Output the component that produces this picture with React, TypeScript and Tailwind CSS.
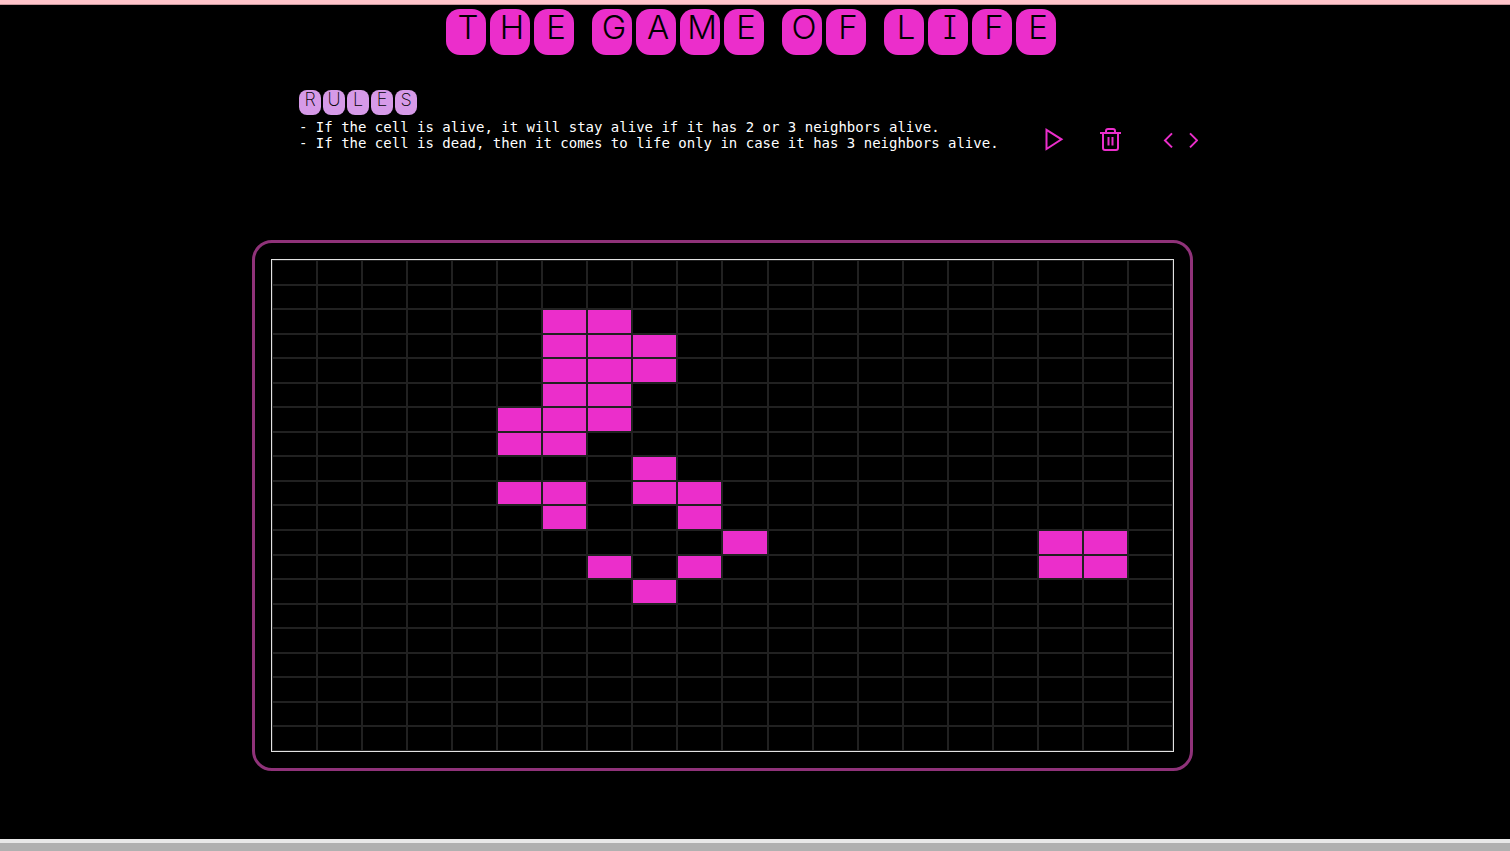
import { useState } from "react";

const SIZE = 20;

const START: Record<number, number[]> = {
  2: [6, 7],
  3: [6, 7, 8],
  4: [6, 7, 8],
  5: [6, 7],
  6: [5, 6, 7],
  7: [5, 6],
  8: [8],
  9: [5, 6, 8, 9],
  10: [6, 9],
  11: [10, 17, 18],
  12: [7, 9, 17, 18],
  13: [8],
};

function startCells(): boolean[] {
  return Array.from({ length: SIZE * SIZE }, (_, i) =>
    (START[Math.floor(i / SIZE)] ?? []).includes(i % SIZE),
  );
}

function nextCells(cells: boolean[]): boolean[] {
  return cells.map((alive, i) => {
    const row = Math.floor(i / SIZE);
    const col = i % SIZE;
    let count = 0;
    for (let r = row - 1; r <= row + 1; r++) {
      for (let c = col - 1; c <= col + 1; c++) {
        if ((r !== row || c !== col) && r >= 0 && c >= 0 && r < SIZE && c < SIZE && cells[r * SIZE + c]) count++;
      }
    }
    return count === 3 || (alive && count === 2);
  });
}

function Title() {
  return (
    <h1 className="flex flex-wrap justify-center gap-[18px] pt-1 pr-2 font-['Inter',sans-serif] text-[33px] leading-9 font-light text-black [font-feature-settings:'ss02','cv08']">
      {["THE", "GAME", "OF", "LIFE"].map((word) => (
        <span key={word} className="flex gap-1">
          {word.split("").map((letter, i) => (
            <span key={i} className="flex h-[46px] w-10 justify-center rounded-[14px] bg-[#eb2ecb] pl-1">
              {letter}
            </span>
          ))}
        </span>
      ))}
    </h1>
  );
}

function Rules() {
  return (
    <section>
      <h2 className="flex gap-0.5 font-['Inter',sans-serif] text-[18px] leading-5 font-extralight text-black [font-feature-settings:'ss02','cv08']">
        {"RULES".split("").map((letter) => (
          <span key={letter} className="h-[25px] w-[22px] rounded-lg bg-[#d69ae8] text-center">
            {letter}
          </span>
        ))}
      </h2>
      <p className="pt-1 font-['DejaVu_Sans_Mono',monospace] text-[14px] leading-4 text-white">
        - If the cell is alive, it will stay alive if it has 2 or 3 neighbors alive.
        <br />- If the cell is dead, then it comes to life only in case it has 3 neighbors alive.
      </p>
    </section>
  );
}

interface ControlsProps {
  onPlay: () => void;
  onClear: () => void;
  onBack: () => void;
  onNext: () => void;
}

function Controls({ onPlay, onClear, onBack, onNext }: ControlsProps) {
  return (
    <div className="flex shrink-0 items-center pt-[37px] text-[#eb2ecb]">
      <button type="button" aria-label="Play" onClick={onPlay} className="mr-9">
        <svg width="19" height="24" viewBox="0 0 19 24" fill="none" stroke="currentColor" strokeWidth="2">
          <path d="M1.5 2.8 16.5 12.3 1.5 22Z" />
        </svg>
      </button>
      <button type="button" aria-label="Clear" onClick={onClear} className="mr-10">
        <svg width="22" height="24" viewBox="0 0 22 24" fill="none" stroke="currentColor" strokeWidth="2">
          <path d="M0 6h21M3 6v15q0 2 2 2h11q2 0 2-2V6M6 6V4q0-2 2-2h5q2 0 2 2v2M8.5 10v8.5M12.5 10v8.5" />
        </svg>
      </button>
      <div className="flex gap-3">
        <button type="button" aria-label="Previous generation" onClick={onBack}>
          <svg width="12" height="24" viewBox="0 0 12 24" fill="none" stroke="currentColor" strokeWidth="2">
            <path d="M10 6.4 3 13.4l7 7" />
          </svg>
        </button>
        <button type="button" aria-label="Next generation" onClick={onNext}>
          <svg width="12" height="24" viewBox="0 0 12 24" fill="none" stroke="currentColor" strokeWidth="2">
            <path d="m4 6.4 7 7-7 7" />
          </svg>
        </button>
      </div>
    </div>
  );
}

export default function App() {
  const [history, setHistory] = useState<boolean[][]>([startCells()]);
  const cells = history[history.length - 1];
  const push = (next: boolean[]) => setHistory([...history, next]);

  return (
    <div className="flex min-h-screen flex-col bg-black">
      <div className="h-[5px] border-b border-[#c8979c] bg-[#ffc4ca]" />
      <main className="flex-1">
        <Title />
        <div className="mt-[35px] ml-[299px] flex max-w-[899px] items-start justify-between">
          <Rules />
          <Controls
            onPlay={() => push(nextCells(cells))}
            onClear={() => push(cells.map(() => false))}
            onBack={() => history.length > 1 && setHistory(history.slice(0, -1))}
            onNext={() => push(nextCells(cells))}
          />
        </div>
        <div className="mt-[89px] ml-[252px] max-w-[941px] rounded-[20px] border-[3px] border-[#8f3279] p-4">
          <div className="grid aspect-[903/493] grid-cols-[repeat(20,minmax(0,1fr))] grid-rows-[repeat(20,minmax(0,1fr))] border border-[#e2e2e2]">
            {cells.map((alive, i) => (
              <button
                key={i}
                type="button"
                aria-label={`Row ${Math.floor(i / SIZE) + 1}, column ${(i % SIZE) + 1}`}
                aria-pressed={alive}
                onClick={() => push(cells.map((c, j) => (j === i ? !c : c)))}
                className={alive ? "border border-[#212121] bg-[#eb2ecb]" : "border border-[#212121] bg-black"}
              />
            ))}
          </div>
        </div>
      </main>
      <footer className="h-3 border-t-4 border-[#e8e8e8] bg-[#b0b0b0]" />
    </div>
  );
}
